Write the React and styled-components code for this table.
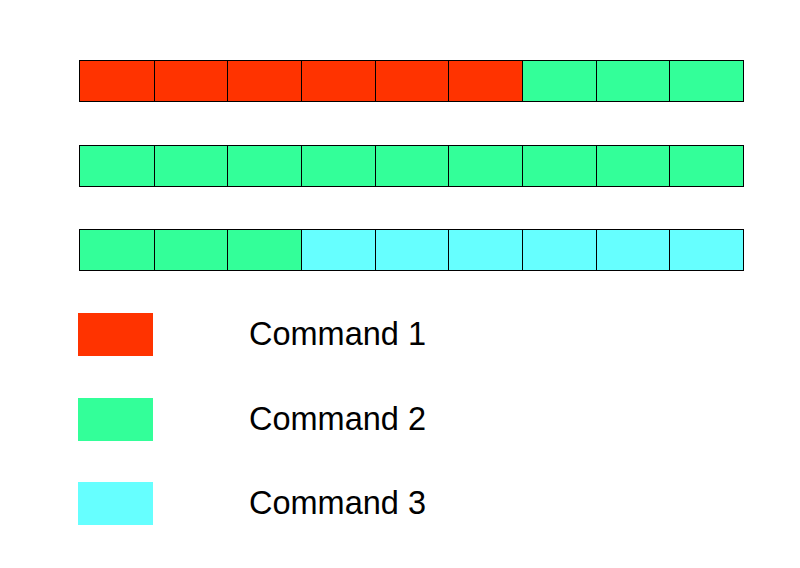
import { createGlobalStyle } from 'styled-components';
import styled from 'styled-components';

const COLORS = {
  1: '#ff3300',
  2: '#33ff99',
  3: '#66ffff',
};

const bars = [
  [1, 1, 1, 1, 1, 1, 2, 2, 2],
  [2, 2, 2, 2, 2, 2, 2, 2, 2],
  [2, 2, 2, 3, 3, 3, 3, 3, 3],
];

const GlobalStyle = createGlobalStyle`
  html, body {
    margin: 0;
    padding: 0;
    background: #fff;
  }
  body {
    font-family: "Liberation Sans", Arial, sans-serif;
  }
`;

const Page = styled.div`
  width: 800px;
  height: 568px;
  box-sizing: border-box;
  padding: 60px 0 0 79px;
  display: flex;
  flex-direction: column;
`;

const Bars = styled.div`
  display: flex;
  flex-direction: column;
  gap: 42.5px;
`;

const Bar = styled.div`
  width: 665px;
  height: 42px;
  box-sizing: border-box;
  border: 1px solid #000;
  display: grid;
  grid-template-columns: repeat(9, 1fr);
`;

const Cell = styled.div`
  background: ${(p) => p.$color};
  & + & {
    border-left: 1px solid #000;
  }
`;

const Legend = styled.div`
  margin-top: 42px;
  margin-left: -1px;
  display: flex;
  flex-direction: column;
  gap: 41.5px;
`;

const LegendRow = styled.div`
  display: flex;
  align-items: center;
`;

const Swatch = styled.div`
  width: 75px;
  height: 43px;
  background: ${(p) => p.$color};
`;

const Label = styled.span`
  margin-left: 96px;
  font-size: 32.5px;
  color: #000;
  line-height: 1;
`;

export default function App() {
  return (
    <>
      <GlobalStyle />
      <Page>
        <Bars>
          {bars.map((bar, i) => (
            <Bar key={i}>
              {bar.map((c, j) => (
                <Cell key={j} $color={COLORS[c]} />
              ))}
            </Bar>
          ))}
        </Bars>
        <Legend>
          {[1, 2, 3].map((n) => (
            <LegendRow key={n}>
              <Swatch $color={COLORS[n]} />
              <Label>Command {n}</Label>
            </LegendRow>
          ))}
        </Legend>
      </Page>
    </>
  );
}
